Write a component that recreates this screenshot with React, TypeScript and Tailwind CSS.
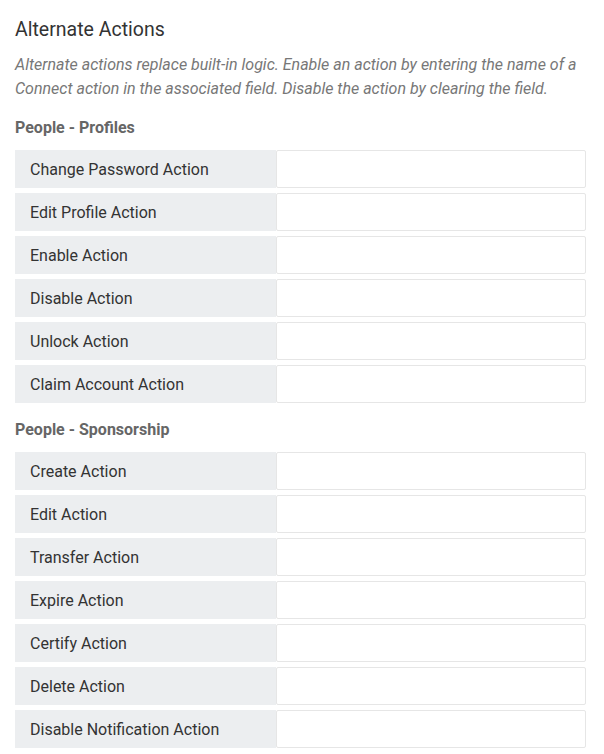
const groups = [
  {
    title: "People - Profiles",
    actions: [
      "Change Password Action",
      "Edit Profile Action",
      "Enable Action",
      "Disable Action",
      "Unlock Action",
      "Claim Account Action",
    ],
  },
  {
    title: "People - Sponsorship",
    actions: [
      "Create Action",
      "Edit Action",
      "Transfer Action",
      "Expire Action",
      "Certify Action",
      "Delete Action",
      "Disable Notification Action",
    ],
  },
];

function ActionRow({ label }: { label: string }) {
  return (
    <div className="flex h-[38px]">
      <div className="w-[261px] shrink-0 bg-[#eceef0] pl-[15px] pt-[2px] flex items-center text-[16px] text-[#333]">
        {label}
      </div>
      <input
        type="text"
        className="flex-1 min-w-0 border border-[#e6e6e6] rounded-[2px] bg-white px-3 outline-none"
      />
    </div>
  );
}

export default function App() {
  return (
    <div className="bg-white min-h-screen pl-[15px] pt-[18px] pr-[18px] font-['Roboto',sans-serif]">
      <h1 className="text-[19.5px] leading-[24px] text-[#333]">Alternate Actions</h1>
      <p className="mt-[11px] text-[16px] leading-[24px] italic text-[#777]">
        Alternate actions replace built-in logic. Enable an action by entering the name of a Connect action in the
        associated field. Disable the action by clearing the field.
      </p>
      {groups.map((g) => (
        <div key={g.title}>
          <h2 className="mt-[17px] text-[16px] leading-[20px] font-bold text-[#666]">{g.title}</h2>
          <div className="mt-[12px] flex flex-col gap-[5px]">
            {g.actions.map((a) => (
              <ActionRow key={a} label={a} />
            ))}
          </div>
        </div>
      ))}
    </div>
  );
}
